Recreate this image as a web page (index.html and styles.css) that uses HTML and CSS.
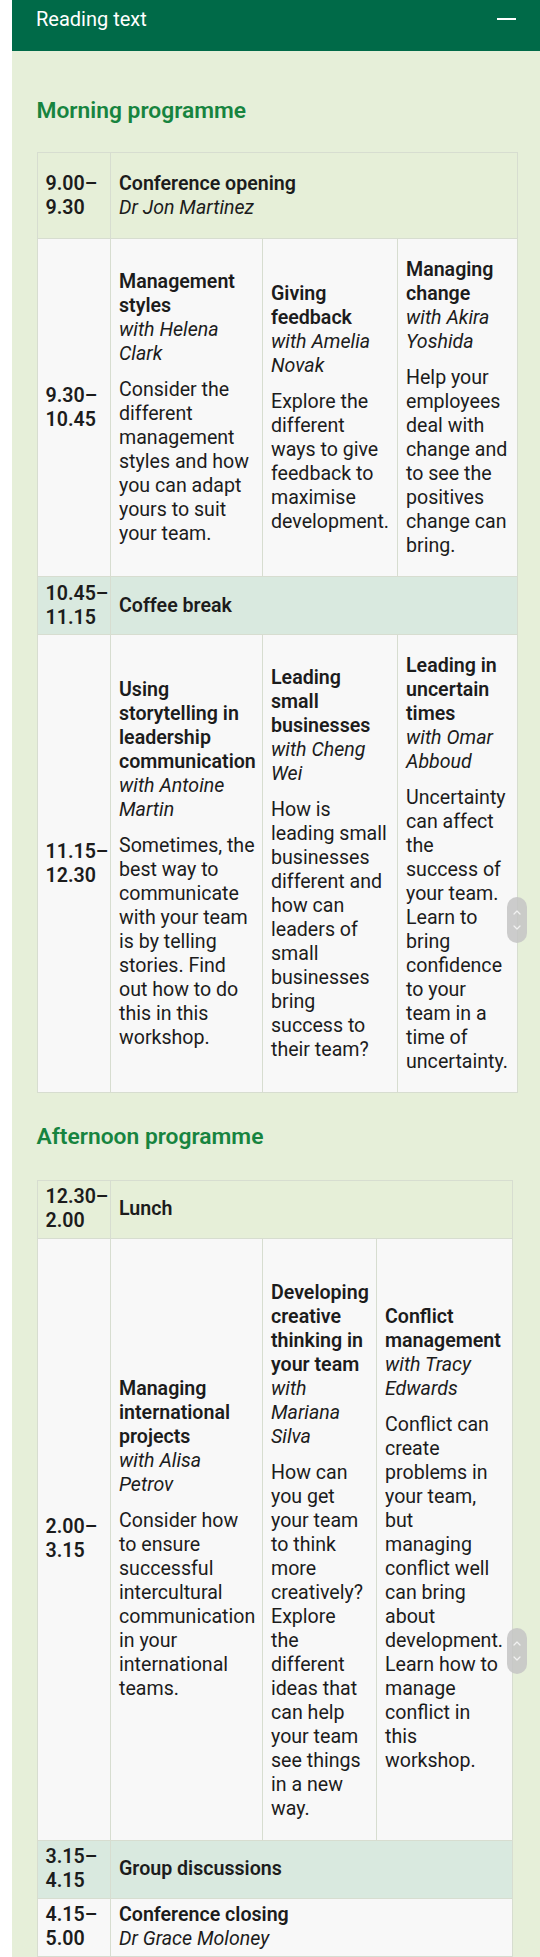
FILE: index.html
```html
<!DOCTYPE html>
<html lang="en">
<head>
<meta charset="utf-8">
<title>Reading text</title>
<link rel="stylesheet" href="styles.css">
</head>
<body>
<div class="page">
  <header class="bar">
    <span class="bar-title">Reading text</span>
    <span class="collapse" aria-hidden="true"></span>
  </header>
  <main class="content">
    <h2 class="section-title">Morning programme</h2>
    <table class="schedule schedule-morning">
      <colgroup>
        <col class="col-time"><col class="col-a"><col class="col-b-m"><col class="col-c-m">
      </colgroup>
      <tbody>
        <tr class="row-plenary row-tint">
          <td class="time">9.00–<br>9.30</td>
          <td colspan="3"><span class="session-title">Conference opening</span><span class="speaker">Dr Jon Martinez</span></td>
        </tr>
        <tr class="row-workshop">
          <td class="time">9.30–<br>10.45</td>
          <td class="cell-a"><span class="session-title">Management styles</span><span class="speaker">with Helena Clark</span><p class="desc">Consider the different management styles and how you can adapt yours to suit your team.</p></td>
          <td class="cell-b-m"><span class="session-title">Giving feedback</span><span class="speaker">with Amelia Novak</span><p class="desc">Explore the different ways to give feedback to maximise development.</p></td>
          <td class="cell-c-m"><span class="session-title">Managing change</span><span class="speaker">with Akira Yoshida</span><p class="desc">Help your employees deal with change and to see the positives change can bring.</p></td>
        </tr>
        <tr class="row-short row-break">
          <td class="time">10.45–<br>11.15</td>
          <td colspan="3"><span class="session-title">Coffee break</span></td>
        </tr>
        <tr class="row-workshop">
          <td class="time">11.15–<br>12.30</td>
          <td class="cell-a"><span class="session-title">Using storytelling in leadership communication</span><span class="speaker">with Antoine Martin</span><p class="desc">Sometimes, the best way to communicate with your team is by telling stories. Find out how to do this in this workshop.</p></td>
          <td class="cell-b-m"><span class="session-title">Leading small businesses</span><span class="speaker">with Cheng Wei</span><p class="desc">How is leading small businesses different and how can leaders of small businesses bring success to their team?</p></td>
          <td class="cell-c-m"><span class="session-title">Leading in uncertain times</span><span class="speaker">with Omar Abboud</span><p class="desc">Uncertainty can affect the success of your team. Learn to bring confidence to your team in a time of uncertainty.</p></td>
        </tr>
      </tbody>
    </table>

    <h2 class="section-title">Afternoon programme</h2>
    <table class="schedule schedule-afternoon">
      <colgroup>
        <col class="col-time"><col class="col-a"><col class="col-b-a"><col class="col-c-a">
      </colgroup>
      <tbody>
        <tr class="row-short row-tint">
          <td class="time">12.30–<br>2.00</td>
          <td colspan="3"><span class="session-title">Lunch</span></td>
        </tr>
        <tr class="row-workshop">
          <td class="time">2.00–<br>3.15</td>
          <td class="cell-a"><span class="session-title">Managing international projects</span><span class="speaker">with Alisa Petrov</span><p class="desc">Consider how to ensure successful intercultural communication in your international teams.</p></td>
          <td class="cell-b-a"><span class="session-title lead-gap">Developing creative thinking in your team</span><span class="speaker">with Mariana Silva</span><p class="desc">How can you get your team to think more creatively? Explore the different ideas that can help your team see things in a new way.</p></td>
          <td class="cell-c-a"><span class="session-title">Conflict management</span><span class="speaker">with Tracy Edwards</span><p class="desc">Conflict can create problems in your team, but managing conflict well can bring about development. Learn how to manage conflict in this workshop.</p></td>
        </tr>
        <tr class="row-short row-break">
          <td class="time">3.15–<br>4.15</td>
          <td colspan="3"><span class="session-title">Group discussions</span></td>
        </tr>
        <tr class="row-short">
          <td class="time">4.15–<br>5.00</td>
          <td colspan="3"><span class="session-title">Conference closing</span><span class="speaker">Dr Grace Moloney</span></td>
        </tr>
      </tbody>
    </table>
  </main>

  <div class="scroll-thumb scroll-thumb-1" aria-hidden="true">
    <svg width="20" height="46" viewBox="0 0 20 46"><path d="M7 17 L10 14 L13 17 M7 29 L10 32 L13 29" fill="none" stroke="#f2f2f2" stroke-width="1.2" stroke-linecap="round" stroke-linejoin="round"/></svg>
  </div>
  <div class="scroll-thumb scroll-thumb-2" aria-hidden="true">
    <svg width="20" height="46" viewBox="0 0 20 46"><path d="M7 17 L10 14 L13 17 M7 29 L10 32 L13 29" fill="none" stroke="#f2f2f2" stroke-width="1.2" stroke-linecap="round" stroke-linejoin="round"/></svg>
  </div>
</div>
</body>
</html>
```
FILE: styles.css
```css
* { box-sizing: border-box; }
html, body { margin: 0; padding: 0; }
body {
  background: #ffffff;
  font-family: Roboto, "Liberation Sans", sans-serif;
  color: #1c1c1c;
}
.page {
  position: relative;
  margin-left: 12px;
  min-height: 1957px;
  background: #e6efd9;
}
.bar {
  height: 51px;
  background: #006a48;
  color: #ffffff;
  display: flex;
  justify-content: space-between;
  align-items: flex-start;
  padding: 7px 24px 0 24px;
}
.bar-title {
  font-size: 20px;
  line-height: 24px;
}
.collapse {
  width: 19px;
  height: 2px;
  margin-top: 11px;
  background: #ffffff;
}
.content {
  padding: 45.5px 0 0 24.5px;
}
.section-title {
  margin: 0;
  font-size: 22.8px;
  line-height: 28px;
  font-weight: 600;
  color: #17843f;
}
.schedule {
  border-collapse: collapse;
  table-layout: fixed;
  margin: 27.5px 0 30px;
  font-size: 19.6px;
  line-height: 24px;
}
.schedule-morning { width: 480px; }
.schedule-afternoon { width: 475px; margin-top: 28.5px; }
.col-time { width: 73.5px; }
.col-a { width: 152px; }
.col-b-m { width: 135px; }
.col-c-m { width: 119.5px; }
.col-b-a { width: 114px; }
.col-c-a { width: 135.5px; }
.schedule td {
  border: 1px solid #d7ddd0;
  padding: 18.5px 8px;
  vertical-align: middle;
  background: #f8f8f8;
}
.schedule td.cell-a { padding-right: 5.5px; }
.schedule td.cell-b-m { padding-right: 7.5px; }
.schedule td.cell-c-m { padding-right: 7.6px; }
.schedule td.cell-b-a { padding-right: 10px; }
.schedule td.cell-c-a { padding-right: 10px; }
.schedule .row-tint td { background: #e6efd8; }
.schedule .row-break td { background: #d9e9df; }
.schedule .row-short td { padding-top: 4.5px; padding-bottom: 4.5px; }
.time { font-weight: 600; white-space: nowrap; }
.session-title {
  display: block;
  font-weight: 600;
}
.lead-gap { padding-top: 24px; }
.speaker {
  display: block;
  font-style: italic;
}
.desc { margin: 12px 0 0; }
.scroll-thumb {
  position: absolute;
  left: 495px;
  width: 20px;
  height: 46px;
  border-radius: 10px;
  background: rgba(196, 196, 196, 0.85);
}
.scroll-thumb svg { display: block; }
.scroll-thumb-1 { top: 897px; }
.scroll-thumb-2 { top: 1628px; }
```
